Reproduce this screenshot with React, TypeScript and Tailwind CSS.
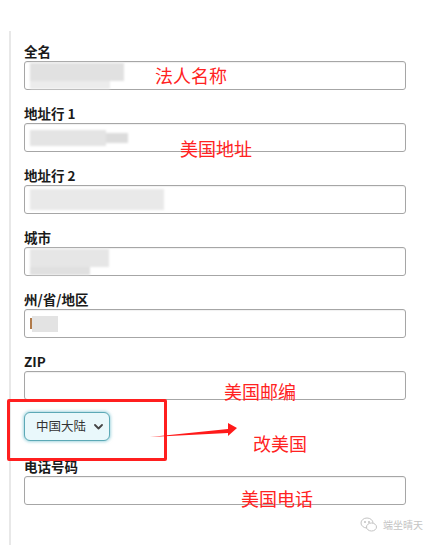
import * as React from "react";

type FieldProps = {
  label: string;
  children?: React.ReactNode;
  className?: string;
};

function Field({ label, children, className = "" }: FieldProps) {
  return (
    <div className={className}>
      <div className="text-[13.5px] font-bold leading-[16px] text-[#1a1a1a]">{label}</div>
      <div className="mt-[2px] flex h-[29px] w-[382px] items-center rounded-[3px] border border-[#a6a6a6] bg-white pl-[5px] shadow-[inset_0_1px_1px_rgba(0,0,0,0.06)]">
        {children}
      </div>
    </div>
  );
}

function Note({ text, className }: { text: string; className: string }) {
  return (
    <div className={`absolute text-[18px] leading-none text-[#ff2222] ${className}`}>{text}</div>
  );
}

export default function App() {
  return (
    <div className="relative h-[545px] w-[437px] overflow-hidden bg-white font-['Noto_Sans_CJK_SC','Noto_Sans',sans-serif]">
      <div className="ml-[9px] mt-[31px] h-[514px] border-l-2 border-[#e8e8e8] pl-[13px] pt-[12px]">
        <Field label="全名" className="mb-[15px]">
          <div className="flex h-[26px] w-[94px] flex-col blur-[1px]">
            <div className="h-[18px] bg-[#e1e1e1]" />
            <div className="h-[8px] w-[80px] bg-[#ececec]" />
          </div>
        </Field>
        <Field label="地址行 1" className="mb-[15px]">
          <div className="flex h-[16px] items-center blur-[1px]">
            <div className="h-[16px] w-[76px] bg-[#e4e4e4]" />
            <div className="h-[10px] w-[22px] bg-[#dcdcdc]" />
          </div>
        </Field>
        <Field label="地址行 2" className="mb-[15px]">
          <div className="h-[21px] w-[134px] bg-[#e9e9e9] blur-[1px]" />
        </Field>
        <Field label="城市" className="mb-[15px]">
          <div className="flex h-[26px] w-[79px] flex-col blur-[1px]">
            <div className="h-[18px] bg-[#e6e6e6]" />
            <div className="h-[8px] w-[60px] bg-[#e0e0e0]" />
          </div>
        </Field>
        <Field label="州/省/地区" className="mb-[15px]">
          <div className="flex items-center">
            <div className="h-[11px] w-[2px] bg-[#b07a4a]" />
            <div className="h-[16px] w-[26px] bg-[#e3e3e3] blur-[0.5px]" />
          </div>
        </Field>
        <Field label="ZIP" />
        <div className="mt-[12px] mb-[17px]">
          <button className="flex h-[29px] w-[86px] items-center gap-[8px] rounded-[6px] border border-[#5ca9b6] bg-[#e9f8fb] pl-[11px] text-[12.5px] text-[#333] shadow-[0_0_3px_1px_rgba(110,190,205,0.6)]">
            <span>中国大陆</span>
            <svg width="9" height="6" viewBox="0 0 9 6" fill="none">
              <path d="M1 1l3.5 3.5L8 1" stroke="#444" strokeWidth="1.8" strokeLinecap="round" strokeLinejoin="round" />
            </svg>
          </button>
        </div>
        <Field label="电话号码" />
      </div>

      {/* annotations */}
      <Note text="法人名称" className="left-[155px] top-[66px]" />
      <Note text="美国地址" className="left-[180px] top-[139px]" />
      <Note text="美国邮编" className="left-[224px] top-[382px]" />
      <Note text="改美国" className="left-[253px] top-[434px]" />
      <Note text="美国电话" className="left-[241px] top-[489px]" />

      <div className="absolute left-[7px] top-[399px] h-[62px] w-[160px] rounded-[2px] border-[3px] border-[#ff1f1f]" />

      <svg className="absolute left-[148px] top-[420px]" width="92" height="20" viewBox="0 0 92 20">
        <polygon points="2,17 80,9 80,3 89,8 80,16 80,13" fill="#ff1a1a" />
      </svg>

      <div className="absolute left-[360px] top-[517px] flex items-center gap-[5px] text-[#c4c4c4]">
        <svg width="18" height="16" viewBox="0 0 18 16" fill="none" stroke="#c4c4c4" strokeWidth="1">
          <ellipse cx="7" cy="6" rx="6" ry="5" />
          <ellipse cx="11.5" cy="10" rx="5" ry="4" fill="white" />
          <circle cx="5" cy="5" r="0.6" fill="#c4c4c4" />
          <circle cx="9" cy="5" r="0.6" fill="#c4c4c4" />
        </svg>
        <span className="text-[10px] leading-none">端坐晴天</span>
      </div>
    </div>
  );
}
